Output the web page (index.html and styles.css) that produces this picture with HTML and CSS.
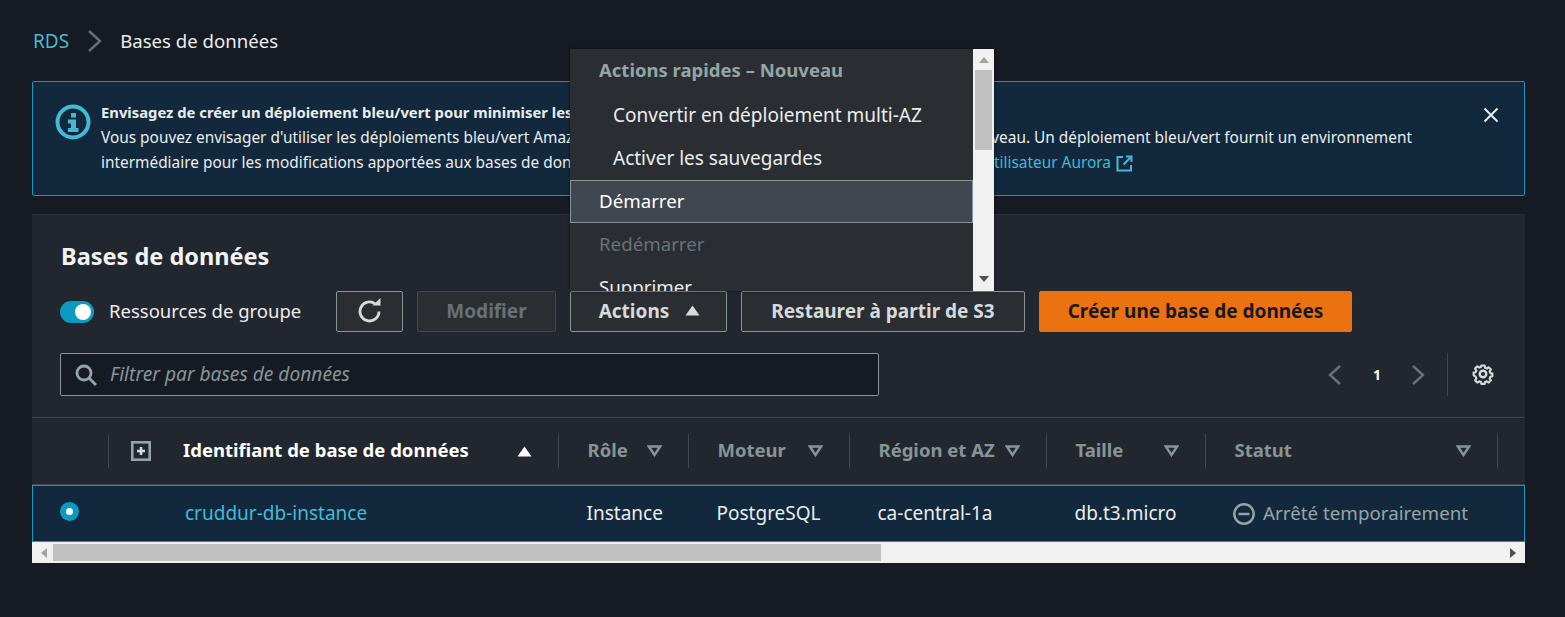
FILE: index.html
```html
<!DOCTYPE html>
<html lang="fr">
<head>
<meta charset="utf-8">
<title>Bases de données</title>
<link rel="stylesheet" href="styles.css">
</head>
<body>
<main class="page">
  <nav class="crumbs">
    <a class="crumb-link">RDS</a>
    <svg class="crumb-sep" width="15" height="24" viewBox="0 0 15 24"><path d="M2 2l11 10L2 22" fill="none" stroke="#687078" stroke-width="2.400"/></svg>
    <span class="crumb-current">Bases de données</span>
  </nav>

  <section class="alert">
    <svg class="alert-icon" width="36" height="36" viewBox="0 0 36 36"><circle cx="18" cy="18" r="15.500" fill="none" stroke="#44b9d6" stroke-width="4"/><rect x="16" y="9" width="5" height="4.500" fill="#44b9d6"/><path d="M13 15.500h8V24h2.500v4H13v-4h3v-4.500h-3z" fill="#44b9d6"/></svg>
    <div class="alert-body">
      <div class="alert-line alert-title">Envisagez de créer un déploiement bleu/vert pour minimiser les temps d'arrêt</div>
      <div class="alert-line alert-wide"><span>Vous pouvez envisager d'utiliser les déploiements bleu/vert Amazon Aurora</span><span>niveau. Un déploiement bleu/vert fournit un environnement</span></div>
      <div class="alert-line alert-mid"><span>intermédiaire pour les modifications apportées aux bases de données</span><a class="alert-link">Guide de l'utilisateur Aurora <svg class="ext" width="17" height="17" viewBox="0 0 17 17"><path d="M7 2H1.500v13.500H15V10M10 1.500h5.500V7M15 2L7.500 9.500" fill="none" stroke="#44b9d6" stroke-width="2"/></svg></a></div>
    </div>
    <svg class="alert-close" width="16" height="16" viewBox="0 0 16 16"><path d="M1.500 1.500l13 13M14.500 1.500l-13 13" fill="none" stroke="#eaeded" stroke-width="2"/></svg>
  </section>

  <section class="panel">
    <div class="panel-head">
      <h1 class="panel-title">Bases de données</h1>
      <div class="toolbar">
        <label class="toggle-wrap"><span class="toggle"><span class="knob"></span></span><span class="toggle-label">Ressources de groupe</span></label>
        <button class="btn btn-refresh"><svg width="24" height="26" viewBox="0 0 24 26"><path d="M21 14.500a9.500 9.500 0 1 1-3.600-7.500" fill="none" stroke="#d5dbdb" stroke-width="2.800"/><path d="M14.500 8.500h8V1z" fill="#d5dbdb"/></svg></button>
        <button class="btn btn-disabled btn-modify">Modifier</button>
        <div class="menu-anchor">
          <button class="btn btn-actions">Actions <svg class="caret" width="15" height="11" viewBox="0 0 15 11"><path d="M7.500 0.500L14.500 10.500H.5z" fill="#d5dbdb"/></svg></button>
          <div class="menu">
            <ul class="menu-list">
              <li class="menu-head">Actions rapides – Nouveau</li>
              <li class="menu-item menu-sub">Convertir en déploiement multi-AZ</li>
              <li class="menu-item menu-sub">Activer les sauvegardes</li>
              <li class="menu-item menu-hover">Démarrer</li>
              <li class="menu-item menu-off">Redémarrer</li>
              <li class="menu-item">Supprimer</li>
            </ul>
            <div class="vbar">
              <svg class="vbar-arrow" width="10" height="6" viewBox="0 0 10 6"><path d="M5 0l5 6H0z" fill="#a3a3a3"/></svg>
              <span class="vbar-thumb"></span>
              <svg class="vbar-arrow vbar-down" width="10" height="6" viewBox="0 0 10 6"><path d="M0 0h10L5 6z" fill="#505050"/></svg>
            </div>
          </div>
        </div>
        <button class="btn btn-restore">Restaurer à partir de S3</button>
        <button class="btn btn-primary">Créer une base de données</button>
      </div>
      <div class="filter-row">
        <div class="filter">
          <svg width="24" height="24" viewBox="0 0 24 24"><circle cx="10" cy="10" r="7" fill="none" stroke="#95a5a6" stroke-width="2.800"/><path d="M15 15l7 7" stroke="#95a5a6" stroke-width="2.800"/></svg>
          <span class="filter-text">Filtrer par bases de données</span>
        </div>
        <div class="pager">
          <svg class="pager-prev" width="14" height="22" viewBox="0 0 14 22"><path d="M12 2L2 11l10 9" fill="none" stroke="#687078" stroke-width="2.400"/></svg>
          <span class="page-num">1</span>
          <svg width="14" height="22" viewBox="0 0 14 22"><path d="M2 2l10 9-10 9" fill="none" stroke="#687078" stroke-width="2.400"/></svg>
          <span class="pager-sep"></span>
          <svg class="gear" width="22" height="22" viewBox="0 0 22 22"><circle cx="11" cy="11" r="3.300" fill="none" stroke="#d5dbdb" stroke-width="2.400"/><path d="M9.200 1.600h3.600l.5 2.500 1.900.8 2.100-1.400 2.500 2.500-1.400 2.100.8 1.900 2.200.5v3l-2.200.5-.8 1.900 1.400 2.100-2.500 2.500-2.100-1.400-1.900.8-.5 2.100H9.200l-.5-2.100-1.900-.8-2.100 1.400-2.500-2.500 1.400-2.100-.8-1.900L.6 12.500v-3l2.200-.5.8-1.900-1.400-2.100 2.500-2.500 2.100 1.400 1.900-.8z" fill="none" stroke="#d5dbdb" stroke-width="2.400" stroke-linejoin="round" transform="translate(1.100 1.100) scale(.9)"/></svg>
        </div>
      </div>
    </div>

    <div class="table">
      <div class="grid thead">
        <div class="th th-radio"></div>
        <div class="th th-id">
          <svg class="expand" width="20" height="20" viewBox="0 0 20 20"><rect x="1.300" y="1.300" width="17.400" height="17.400" fill="none" stroke="#95a5a6" stroke-width="2.600"/><path d="M10 6v8M6 10h8" stroke="#d5dbdb" stroke-width="2.600"/></svg>
          <span class="th-label th-strong">Identifiant de base de données</span>
          <svg class="sort sort-up" width="15" height="11" viewBox="0 0 15 11"><path d="M7.500 0.500L14.500 10.500H.5z" fill="#fff"/></svg>
        </div>
        <div class="th"><span class="th-label">Rôle</span><svg class="sort" width="15" height="12" viewBox="0 0 15 12"><path d="M1.800 1.500h11.400L7.500 10z" fill="none" stroke="#879596" stroke-width="2.400"/></svg></div>
        <div class="th"><span class="th-label">Moteur</span><svg class="sort" width="15" height="12" viewBox="0 0 15 12"><path d="M1.800 1.500h11.400L7.500 10z" fill="none" stroke="#879596" stroke-width="2.400"/></svg></div>
        <div class="th"><span class="th-label">Région et AZ</span><svg class="sort" width="15" height="12" viewBox="0 0 15 12"><path d="M1.800 1.500h11.400L7.500 10z" fill="none" stroke="#879596" stroke-width="2.400"/></svg></div>
        <div class="th"><span class="th-label">Taille</span><svg class="sort" width="15" height="12" viewBox="0 0 15 12"><path d="M1.800 1.500h11.400L7.500 10z" fill="none" stroke="#879596" stroke-width="2.400"/></svg></div>
        <div class="th"><span class="th-label">Statut</span><svg class="sort" width="15" height="12" viewBox="0 0 15 12"><path d="M1.800 1.500h11.400L7.500 10z" fill="none" stroke="#879596" stroke-width="2.400"/></svg></div>
        <div class="th th-end"></div>
      </div>
      <div class="grid tbody-row">
        <div class="td td-radio"><span class="radio"></span></div>
        <div class="td td-id"><a class="db-link">cruddur-db-instance</a></div>
        <div class="td">Instance</div>
        <div class="td">PostgreSQL</div>
        <div class="td">ca-central-1a</div>
        <div class="td">db.t3.micro</div>
        <div class="td td-status"><svg width="22" height="22" viewBox="0 0 22 22"><circle cx="11" cy="11" r="9.700" fill="none" stroke="#95a5a6" stroke-width="2.400"/><path d="M5.500 11h11" stroke="#95a5a6" stroke-width="2.400"/></svg><span>Arrêté temporairement</span></div>
        <div class="td"></div>
      </div>
      <div class="hbar">
        <svg width="6" height="10" viewBox="0 0 6 10"><path d="M6 0v10L0 5z" fill="#a3a3a3"/></svg>
        <span class="hbar-thumb"></span>
        <svg width="6" height="10" viewBox="0 0 6 10"><path d="M0 0v10l6-5z" fill="#505050"/></svg>
      </div>
    </div>
  </section>
</main>
</body>
</html>
```

FILE: styles.css
```css
* { box-sizing: border-box; }
html, body { margin: 0; height: 100%; }
body {
  background: #161a22;
  color: #d5dbdb;
  font-family: "Noto Sans", "Liberation Sans", sans-serif;
  font-size: 18px;
  overflow: hidden;
}
.page { padding: 0 40px 0 32px; }

.crumbs { height: 81px; display: flex; align-items: center; }
.crumb-link { color: #44b9d6; font-size: 19px; margin-left: 1px; }
.crumb-sep { margin: 0 18px; flex: none; }
.crumb-current { color: #eaeded; font-size: 18.6px; }

.alert {
  height: 115px;
  background: #12293d;
  border: 1px solid #0a9ac2;
  border-radius: 2px;
  display: flex;
  padding: 18px 24px 0 22px;
}
.alert-icon { flex: none; margin: 4px 10px 0 0; }
.alert-body { font-size: 15.4px; flex: 1; min-width: 0; }
.alert-line { height: 24.5px; line-height: 24.5px; white-space: nowrap; color: #eaeded; }
.alert-title { font-weight: 700; font-size: 14.8px; height: 25.5px; }
.alert-wide { display: flex; justify-content: space-between; width: 1311px; }
.alert-mid { display: flex; justify-content: space-between; width: 1032px; padding-top: 1px; }
.alert-link { color: #44b9d6; display: inline-flex; align-items: center; gap: 5px; }
.ext { flex: none; margin-top: 1px; }
.alert-close { flex: none; margin: 7px 1px 0 0; }

.panel {
  margin-top: 18px;
  height: 349px;
  background: #22272f;
  border-top: 1px solid #2a2e33;
  display: flex;
  flex-direction: column;
}
.panel-head { padding: 0 28px; height: 202px; }
.panel-title { margin: 0 0 0 1px; height: 76px; padding-top: 24px; font-size: 23.5px; line-height: 34px; font-weight: 700; color: #f2f3f3; }

.toolbar { display: flex; gap: 14px; height: 41px; align-items: stretch; }
.toggle-wrap { display: flex; align-items: center; gap: 15px; width: 262px; }
.toggle { flex: none; width: 34px; height: 22px; border-radius: 11px; background: #0a9ac2; display: flex; align-items: center; justify-content: flex-end; padding-right: 3px; }
.knob { width: 16px; height: 16px; border-radius: 50%; background: #fff; }
.toggle-label { color: #eaeded; font-size: 18.5px; padding-bottom: 2px; white-space: nowrap; }

.btn {
  font: inherit;
  font-size: 19px;
  font-weight: 700;
  height: 41px;
  padding: 0 0 2px;
  color: #d5dbdb;
  background: #2a2e33;
  border: 1px solid #879596;
  border-radius: 2px;
  display: flex;
  align-items: center;
  justify-content: center;
}
.btn-refresh { width: 67px; padding: 0 0 3px; }
.btn-modify { width: 139px; }
.btn-disabled { color: #687078; border-color: #414750; }
.btn-actions { width: 157px; gap: 16px; padding-left: 2px; }
.btn-restore { width: 284px; }
.btn-primary { width: 313px; background: #ec7211; border-color: #ec7211; color: #16191f; }
.menu-anchor { position: relative; }

.menu {
  position: absolute;
  left: 0;
  bottom: 100%;
  width: 424px;
  height: 242px;
  background: #2a2e33;
  overflow: hidden;
  display: flex;
  box-shadow: 0 0 3px rgba(0,0,0,.6);
  z-index: 5;
}
.menu-list { list-style: none; margin: 0; padding: 0; width: 403px; flex: none; font-size: 18.7px; }
.menu-head { height: 45px; line-height: 41px; padding-left: 29px; font-weight: 700; font-size: 18.5px; color: #95a5a6; }
.menu-item { height: 43px; line-height: 40px; padding-left: 29px; color: #eaeded; border: 1px solid transparent; border-width: 1px 0; }
.menu-sub { padding-left: 43px; font-size: 19px; }
.menu-hover { background: #414750; border: 1px solid #879596; padding-left: 28px; color: #fff; }
.menu-off { color: #687078; }
.vbar { width: 21px; background: #f1f1f1; display: flex; flex-direction: column; align-items: center; padding-top: 8px; }
.vbar-thumb { width: 17px; height: 80px; background: #c1c1c1; margin-top: 7px; }
.vbar-down { margin-top: auto; margin-bottom: 9px; }

.filter-row { display: flex; justify-content: space-between; align-items: center; margin-top: 21px; height: 43px; }
.filter { width: 819px; height: 43px; background: #161a22; border: 1px solid #879596; border-radius: 2px; display: flex; align-items: center; padding-left: 13px; gap: 12px; }
.filter-text { font-style: italic; color: #879596; font-size: 19.2px; padding-bottom: 2px; }
.pager { display: flex; align-items: center; height: 43px; padding-right: 3px; }
.pager-prev { margin-right: 31px; }
.page-num { font-size: 14px; font-weight: 700; color: #fff; width: 8px; margin-right: 30px; }
.pager-sep { width: 1px; height: 43px; background: #414750; margin: 0 24px 0 22px; }
.gear { margin-top: -2px; }

.table { flex: 1; display: flex; flex-direction: column; }
.grid { display: grid; grid-template-columns: 77px 450px 130px 161px 197px 159px 292px 27px; }
.thead { height: 68px; border-top: 1px solid #414750; border-bottom: 1px solid #414750; align-items: center; }
.th { height: 34px; border-right: 1px solid #414750; display: flex; align-items: center; justify-content: space-between; padding: 0 28px 0 28.5px; }
.th-radio { padding: 0; }
.th-id { padding-left: 22px; }
.th-end { border: 0; }
.th-label { font-weight: 700; color: #879596; font-size: 18.5px; padding-bottom: 3px; white-space: nowrap; }
.th-strong { color: #fff; margin-left: 32px; margin-right: auto; }
.expand { flex: none; }
.sort { flex: none; margin-right: -2px; }

.tbody-row { height: 57px; background: #12293d; border: 1px solid #0a9ac2; align-items: center; color: #eaeded; font-size: 19px; }
.td { padding-left: 26.5px; white-space: nowrap; padding-bottom: 1px; }
.tbody-row .td-radio { padding: 0 0 0 27px; }
.radio { width: 19px; height: 19px; border-radius: 50%; background: #0a9ac2; margin-top: -4px; display: flex; align-items: center; justify-content: center; }
.radio::after { content: ""; width: 7px; height: 7px; border-radius: 50%; background: #fff; }
.tbody-row .td-id { padding-left: 75px; }
.db-link { color: #44b9d6; }
.tbody-row .td-status { display: flex; align-items: center; gap: 8px; color: #95a5a6; font-size: 18.8px; padding-left: 26px; }
.td-status svg { flex: none; margin-top: 1px; }

.hbar { flex: 1; background: #f1f1f1; display: flex; align-items: center; padding: 0 9px; }
.hbar-thumb { width: 828px; height: 17px; background: #c1c1c1; margin-left: 6px; margin-right: auto; }
```
